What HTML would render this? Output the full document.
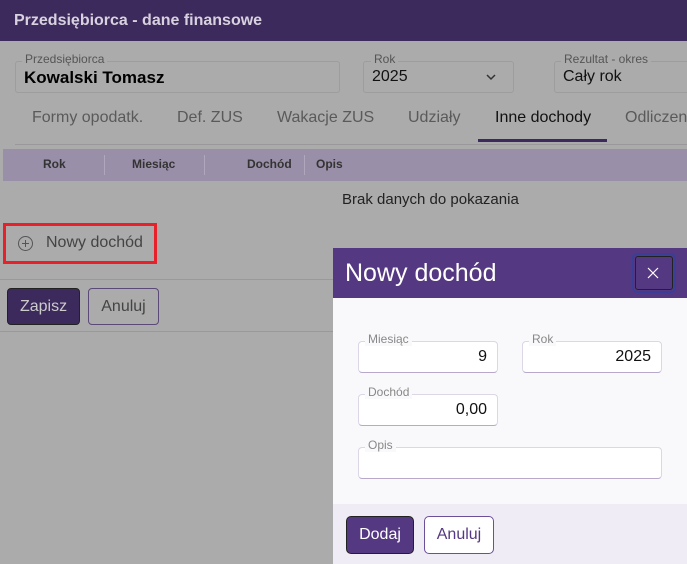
<!DOCTYPE html>
<html><head><meta charset="utf-8"><style>
*{box-sizing:border-box;margin:0;padding:0}
body{width:687px;height:564px;overflow:hidden;position:relative;font-family:"Liberation Sans",sans-serif;background:#ababab}
.a{position:absolute}
.hdr{left:0;top:0;width:687px;height:41px;background:#3d2a5c;color:#d8d2e0;font-weight:bold;font-size:16px;padding:12px 0 0 14px}
.fld{border:1px solid #9d9d9d;border-radius:3px;height:32px}
.lbl{font-size:12px;color:#555;background:#ababab;padding:0 3px}
.tab{top:109px;font-size:16px;color:#5a5a5a}
.th{font-size:12px;font-weight:bold;color:#333;top:157px}
.mf{border:1px solid #dcd6e6;border-bottom:1px solid #b7a9cc;border-radius:4px;height:32px;background:#fff;font-size:16px;text-align:right;padding:6px 10px 0 0;color:#111}
.ml{font-size:12px;color:#888;background:#f9f9fb;padding:0 3px}
</style></head><body>
<div class="a hdr">Przedsiębiorca - dane finansowe</div>
<div class="a fld" style="left:15px;top:61px;width:325px"></div>
<div class="a lbl" style="left:22px;top:52px">Przedsiębiorca</div>
<div class="a" style="left:24px;top:68px;font-size:17px;font-weight:bold;color:#000">Kowalski Tomasz</div>
<div class="a fld" style="left:363px;top:61px;width:151px"></div>
<div class="a lbl" style="left:371px;top:52px">Rok</div>
<div class="a" style="left:372px;top:68px;font-size:16px;color:#111">2025</div>
<svg class="a" style="left:485px;top:72px" width="12" height="10"><path d="M2 3l4 4 4-4" stroke="#333" stroke-width="1.5" fill="none"/></svg>
<div class="a fld" style="left:554px;top:61px;width:140px"></div>
<div class="a lbl" style="left:561px;top:52px">Rezultat - okres</div>
<div class="a" style="left:563px;top:68px;font-size:16px;color:#111">Cały rok</div>
<div class="a tab" style="left:32px">Formy opodatk.</div>
<div class="a tab" style="left:177px">Def. ZUS</div>
<div class="a tab" style="left:277px">Wakacje ZUS</div>
<div class="a tab" style="left:408px">Udziały</div>
<div class="a tab" style="left:495px;color:#111">Inne dochody</div>
<div class="a tab" style="left:625px">Odliczen</div>
<div class="a" style="left:478px;top:139px;width:129px;height:3px;background:#3d2a5c"></div>
<div class="a" style="left:15px;top:144px;width:672px;height:1px;background:#999"></div>
<div class="a" style="left:3px;top:149px;width:684px;height:32px;background:#9a8fa8"></div>
<div class="a th" style="left:43px">Rok</div>
<div class="a" style="left:104px;top:155px;width:1px;height:20px;background:#b0a7bc"></div>
<div class="a th" style="left:132px">Miesiąc</div>
<div class="a" style="left:204px;top:155px;width:1px;height:20px;background:#b0a7bc"></div>
<div class="a th" style="left:247px">Dochód</div>
<div class="a" style="left:304px;top:155px;width:1px;height:20px;background:#b0a7bc"></div>
<div class="a th" style="left:316px">Opis</div>
<div class="a" style="left:342px;top:191px;font-size:15px;color:#222">Brak danych do pokazania</div>
<div class="a" style="left:3px;top:223px;width:154px;height:41px;border:3px solid #e8202a"></div>
<svg class="a" style="left:17px;top:235px" width="17" height="17"><circle cx="8.5" cy="8.5" r="7" stroke="#555" fill="none"/><path d="M8.5 5v7M5 8.5h7" stroke="#555"/></svg>
<div class="a" style="left:46px;top:234px;font-size:16px;color:#444">Nowy dochód</div>
<div class="a" style="left:0;top:279px;width:687px;height:1px;background:#999"></div>
<div class="a" style="left:7px;top:288px;width:73px;height:37px;background:#3d2a5c;border:1px solid #222;border-radius:4px;color:#ccc;font-size:16px;text-align:center;line-height:35px">Zapisz</div>
<div class="a" style="left:88px;top:288px;width:71px;height:37px;border:1px solid #5b4a78;border-radius:4px;color:#444;font-size:16px;text-align:center;line-height:35px">Anuluj</div>
<div class="a" style="left:0;top:331px;width:687px;height:1px;background:#999"></div>
<div class="a" style="left:333px;top:248px;width:354px;height:316px;background:#f9f9fb"></div>
<div class="a" style="left:333px;top:248px;width:354px;height:50px;background:#553882"></div>
<div class="a" style="left:345px;top:259px;font-size:25px;color:#fff">Nowy dochód</div>
<div class="a" style="left:632px;top:253px;width:44px;height:40px;border:2px solid #3a3f95;border-radius:5px;padding:1px"><div style="width:100%;height:100%;border:1px solid #222;border-radius:3px"><svg width="34" height="32"><path d="M12 11l10 10M22 11l-10 10" stroke="#fff" stroke-width="1.2"/></svg></div></div>
<div class="a mf" style="left:358px;top:341px;width:140px">9</div>
<div class="a ml" style="left:365px;top:332px">Miesiąc</div>
<div class="a mf" style="left:522px;top:341px;width:140px">2025</div>
<div class="a ml" style="left:529px;top:332px">Rok</div>
<div class="a mf" style="left:358px;top:394px;width:140px">0,00</div>
<div class="a ml" style="left:365px;top:385px">Dochód</div>
<div class="a mf" style="left:358px;top:447px;width:304px"></div>
<div class="a ml" style="left:365px;top:438px">Opis</div>
<div class="a" style="left:333px;top:504px;width:354px;height:60px;background:#efecf5"></div>
<div class="a" style="left:346px;top:516px;width:68px;height:38px;background:#553882;border:1px solid #222;border-radius:5px;color:#fff;font-size:16px;text-align:center;line-height:36px">Dodaj</div>
<div class="a" style="left:424px;top:516px;width:70px;height:38px;border:1px solid #6b4f99;border-radius:5px;color:#553882;font-size:16px;text-align:center;line-height:36px;background:#fff">Anuluj</div>
</body></html>
